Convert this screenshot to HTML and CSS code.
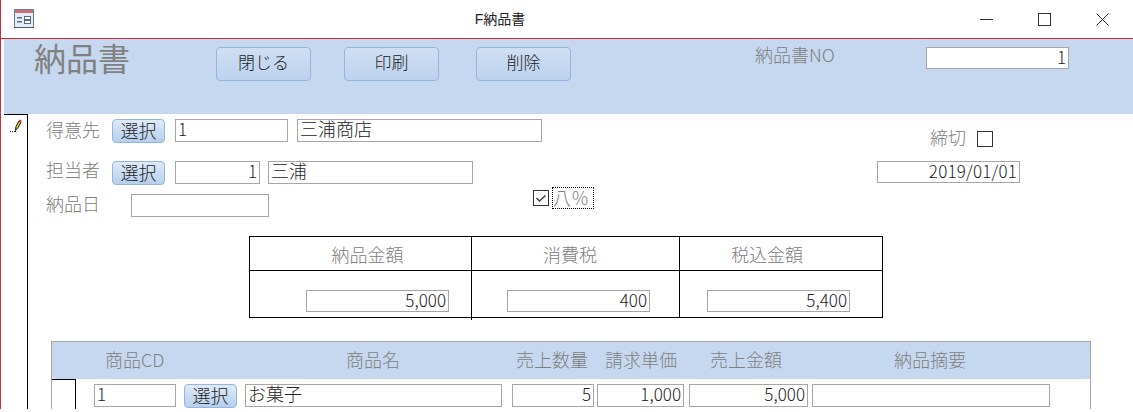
FILE: index.html
```html
<!DOCTYPE html>
<html lang="ja">
<head>
<meta charset="utf-8">
<title>F納品書</title>
<link rel="stylesheet" href="styles.css">
</head>
<body>
<div class="window">
  <header class="titlebar">
    <svg class="appicon" width="20" height="20" viewBox="0 0 20 20" aria-hidden="true">
      <rect x="0.5" y="0.5" width="19" height="18" fill="#e3edf6" stroke="#6a7a90"/>
      <rect x="1" y="1" width="18" height="3" fill="#c9707f"/>
      <rect x="0" y="18" width="20" height="1" fill="#4a5a70"/>
      <rect x="3" y="8" width="5" height="1.5" fill="#5f6f80"/>
      <rect x="3" y="12" width="5" height="1.5" fill="#5f6f80"/>
      <rect x="10.5" y="7.5" width="6" height="3" fill="#fff" stroke="#5a6a80"/>
      <rect x="10.5" y="11.5" width="6" height="3" fill="#fff" stroke="#5a6a80"/>
    </svg>
    <div class="wintitle">F納品書</div>
    <div class="wincontrols">
      <svg width="13" height="13" viewBox="0 0 13 13" aria-hidden="true"><path d="M0 6.5h13" stroke="#333" fill="none"/></svg>
      <svg width="13" height="13" viewBox="0 0 13 13" aria-hidden="true"><rect x="0.5" y="0.5" width="12" height="12" stroke="#333" fill="none"/></svg>
      <svg width="13" height="13" viewBox="0 0 13 13" aria-hidden="true"><path d="M0.5 0.5l12 12M12.5 0.5l-12 12" stroke="#333" fill="none"/></svg>
    </div>
  </header>
  <section class="band">
    <h1 class="formtitle">納品書</h1>
    <button class="btn btn-large btn-close">閉じる</button>
    <button class="btn btn-large btn-print">印刷</button>
    <button class="btn btn-large btn-delete">削除</button>
    <span class="label label-no">納品書NO</span>
    <div class="field num right field-no">1</div>
  </section>
  <section class="detail">
    <div class="selector">
      <svg class="pencil" width="12" height="13" viewBox="0 0 12 13" aria-hidden="true">
        <path d="M5.5 11.5l0.5-4 3-5.5 2 1.2-3 5.5z" fill="#f2d21c" stroke="#111"/>
        <path d="M8.5 2.5l1-2 2.2 1.2-1 2z" fill="#c8242c"/>
        <path d="M0 12h1v1H0zM2 12h1v1H2zM4 12h2v1H4z" fill="#111"/>
      </svg>
    </div>
    <div class="canvas">
      <div class="row row-1">
        <span class="label label-cust">得意先</span>
        <button class="btn btn-small btn-cust">選択</button>
        <div class="field num field-custcd">1</div>
        <div class="field field-custname">三浦商店</div>
        <span class="label label-close">締切</span>
        <span class="checkbox"></span>
      </div>
      <div class="row row-2">
        <span class="label label-staff">担当者</span>
        <button class="btn btn-small btn-cust">選択</button>
        <div class="field num right field-staffcd">1</div>
        <div class="field field-staffname">三浦</div>
        <div class="field num right field-date">2019/01/01</div>
      </div>
      <div class="row row-3">
        <span class="label label-date">納品日</span>
        <div class="field field-delivery"></div>
        <span class="checkbox checked">
          <svg width="14" height="14" viewBox="0 0 14 14" aria-hidden="true"><path d="M2.5 7l3 3 6-5.5" stroke="#444" stroke-width="1.6" fill="none"/></svg>
        </span>
        <span class="label label-eight">八％</span>
      </div>
      <div class="totals">
        <div class="thead thead-1">納品金額</div>
        <div class="thead thead-2">消費税</div>
        <div class="thead thead-3">税込金額</div>
        <div class="tcell tcell-1"><div class="field num right">5,000</div></div>
        <div class="tcell tcell-2"><div class="field num right">400</div></div>
        <div class="tcell tcell-3"><div class="field num right">5,400</div></div>
      </div>
      <div class="sub">
        <div class="subhead">
          <span class="col-cd">商品CD</span>
          <span class="col-name">商品名</span>
          <span class="col-qty">売上数量</span>
          <span class="col-price">請求単価</span>
          <span class="col-amount">売上金額</span>
          <span class="col-note">納品摘要</span>
        </div>
        <div class="subrow">
          <div class="subsel"></div>
          <div class="field num f-cd">1</div>
          <button class="btn btn-small f-btn">選択</button>
          <div class="field f-name">お菓子</div>
          <div class="field num right f-qty">5</div>
          <div class="field num right f-price">1,000</div>
          <div class="field num right f-amount">5,000</div>
          <div class="field f-note"></div>
        </div>
      </div>
    </div>
  </section>
</div>
</body>
</html>
```
FILE: styles.css
```css
* { box-sizing: border-box; }
html, body { margin: 0; padding: 0; background: #fff; }
body {
  width: 1133px;
  height: 412px;
  overflow: hidden;
  font-family: "Noto Sans CJK JP", "Liberation Sans", sans-serif;
  font-size: 18px;
  font-weight: 300;
  color: #222;
}
.window { height: 409px; border-left: 1px solid #b5383f; overflow: hidden; }

.titlebar {
  height: 39px;
  border-bottom: 1px solid #c0303a;
  display: flex;
  align-items: flex-start;
  padding: 9px 0 0 13px;
}
.appicon { flex: none; }
.wintitle { flex: none; width: 932px; text-align: center; font: 400 14px/20px "Liberation Sans", "Noto Sans CJK JP", sans-serif; color: #222; }
.wincontrols { display: flex; gap: 45px; margin-left: 14px; margin-top: 4px; }
.wincontrols svg { flex: none; display: block; }

.band {
  height: 75px;
  margin-left: 3px;
  background: #c6d8ef;
  display: flex;
  align-items: flex-start;
}
.formtitle {
  margin: 0 0 0 30px;
  width: 97px;
  font-size: 32px;
  line-height: 36px;
  font-weight: 400;
  color: #808080;
  flex: none;
}
.label { color: #808080; line-height: 22px; flex: none; white-space: nowrap; }
.field {
  height: 23px;
  border: 1px solid #a6a6a6;
  background: #fff;
  line-height: 17px;
  padding: 0 2px;
  flex: none;
  white-space: nowrap;
}
.num { font-size: 17px; line-height: 18px; }
.right { text-align: right; }
.btn {
  font: inherit;
  color: #222;
  border: 1px solid #94b6dc;
  border-radius: 4px;
  background: linear-gradient(#dfeaf7, #b6cfee);
  padding: 0 0 2px;
  flex: none;
}
.btn-large { width: 95px; height: 34px; margin-top: 8px; font-size: 17px; padding-bottom: 5px; background: linear-gradient(#cfdff3, #bcd2ee); }
.btn-small { width: 53px; height: 24px; line-height: 20px; }
.btn-close { margin-left: 85px; }
.btn-print { margin-left: 33px; }
.btn-delete { margin-left: 37px; }
.label-no { margin-left: 184px; margin-top: 4px; width: 78px; }
.field-no { margin-left: 93px; margin-top: 8px; width: 143px; height: 22px; }

.detail { display: flex; height: 295px; margin-left: 3px; }
.selector {
  flex: none;
  width: 24px;
  border-top: 1px solid #000;
  border-right: 1px solid #000;
  padding: 4px 0 0 6px;
}
.pencil { display: block; }
.canvas { flex: 1; min-width: 0; padding-top: 5px; }
.row { display: flex; align-items: flex-start; padding-left: 18px; }
.row-1 { height: 42px; }
.row-2 { height: 26px; }
.row-3 { height: 49px; }
.label-cust { width: 66px; margin-top: -1px; }
.label-staff { width: 66px; margin-top: -3px; }
.btn-cust { margin-right: 10px; }
.field-custcd { width: 113px; margin-right: 9px; }
.field-custname { width: 245px; }
.label-close { margin-left: 388px; margin-top: 7px; width: 47px; }
.checkbox {
  flex: none;
  width: 16px;
  height: 16px;
  border: 1px solid #333;
  background: #fff;
  display: block;
}
.row-1 .checkbox { margin-top: 12px; }
.checkbox svg { display: block; margin: 0; }
.field-staffcd { width: 85px; margin-right: 8px; }
.field-staffname { width: 205px; }
.field-date { width: 143px; height: 22px; margin-left: 404px; letter-spacing: 0.2px; line-height: 18px; }
.label-date { width: 85px; margin-top: 5px; }
.field-delivery { width: 138px; margin-top: 7px; }
.checked { margin-left: 264px; margin-top: 3px; }
.label-eight {
  margin-left: 3px;
  width: 42px;
  height: 22px;
  border: 1px dotted #000;
  line-height: 18px;
}

.totals {
  margin-left: 221px;
  width: 634px;
  height: 82px;
  display: grid;
  grid-template-columns: 222px 208px 202px;
  grid-template-rows: 34px 47px;
  border: 1px solid #000;
}
.thead {
  border-bottom: 1px solid #000;
  border-right: 1px solid #000;
  text-align: center;
  color: #808080;
  line-height: 34px;
}
.thead-1 { padding-left: 14px; }
.thead-2 { padding-right: 11px; }
.thead-3 { border-right: 0; padding-right: 28px; }
.tcell { position: relative; padding-top: 19px; border-right: 1px solid #000; display: flex; }
.tcell-3 { border-right: 0; }
.tcell .field { width: 143px; height: 22px; }
.tcell-1 { padding-left: 56px; }
.tcell-2 { padding-left: 35px; }
.tcell-3 { padding-left: 27px; }
.tcell-1::after {
  content: "";
  position: absolute;
  right: -1px;
  bottom: -2px;
  width: 1px;
  height: 2px;
  background: #000;
}

.sub {
  margin: 23px 0 0 23px;
  width: 1040px;
  border: 1px solid #a6a6a6;
  border-bottom: 0;
}
.subhead { height: 37px; background: #c6d8ef; display: flex; align-items: center; padding-bottom: 4px; color: #808080; line-height: 22px; }
.subhead span { flex: none; white-space: nowrap; }
.col-cd { margin-left: 53px; width: 241px; }
.col-name { width: 170px; }
.col-qty { width: 89px; }
.col-price { width: 105px; }
.col-amount { width: 184px; }
.subrow { display: flex; align-items: flex-start; height: 30px; }
.subsel { width: 24px; height: 30px; border-top: 1px solid #000; border-right: 1px solid #000; flex: none; }
.subrow .field { margin-top: 5px; }
.f-cd { width: 82px; margin-left: 18px; margin-right: 8px; }
.f-btn { margin-top: 5px; margin-right: 8px; }
.f-name { width: 257px; margin-right: 10px; }
.f-qty { width: 82px; margin-right: 3px; }
.f-price { width: 87px; margin-right: 5px; }
.f-amount { width: 119px; margin-right: 4px; }
.f-note { width: 238px; }
```
